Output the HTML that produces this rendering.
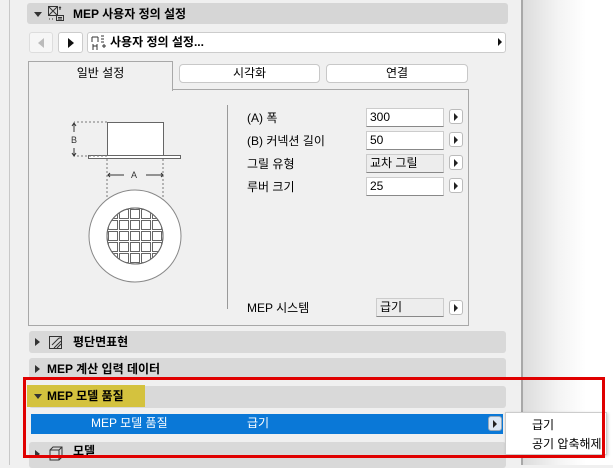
<!DOCTYPE html>
<html><head><meta charset="utf-8"><style>
*{box-sizing:border-box;margin:0;padding:0}
body{width:613px;height:465px;overflow:hidden;background:#f0f0f0;font-family:"Liberation Sans","Noto Sans CJK KR",sans-serif;font-size:12px;color:#000;position:relative}
.a{position:absolute}
.sec{position:absolute;left:29px;width:477px;height:22px;background:#d9d9d9;border-radius:3px;font-weight:bold;font-size:12px;line-height:22px}
.tri{position:absolute;width:0;height:0;border-top:4px solid transparent;border-bottom:4px solid transparent;border-left:5px solid #333}
.trd{position:absolute;width:0;height:0;border-left:4px solid transparent;border-right:4px solid transparent;border-top:5px solid #333}
.inp{position:absolute;background:#fff;border:1px solid #ccc;border-bottom:1px solid #888;height:19px;padding-left:3px;line-height:17px;font-size:12px}
.btn{position:absolute;width:14px;height:15px;background:#fff;border:1px solid #bbb;border-radius:3px}
.btn:after{content:"";position:absolute;left:4px;top:3px;border-top:4px solid transparent;border-bottom:4px solid transparent;border-left:4px solid #222}
.lbl{position:absolute;left:247px;font-size:12px}
.tab{position:absolute;top:64px;height:19px;background:#fff;border:1px solid #c8c8c8;border-radius:4px;text-align:center;line-height:17px}
</style></head><body>
<div class="a" style="left:9px;top:0;width:1px;height:465px;background:#c8c8c8"></div>
<div class="a" style="left:521px;top:0;width:2px;height:465px;background:#a8a8a8"></div>
<div class="a" style="left:523px;top:0;width:90px;height:465px;background:linear-gradient(90deg,#dcdcdc,#f4f4f4 40%,#fff 70%)"></div>

<div class="sec" style="top:3px;left:27px;width:481px;height:21px;background:#d6d6d6"><div class="trd" style="left:7px;top:9px"></div>
<svg class="a" style="left:20px;top:2px" width="18" height="17" viewBox="0 0 18 17" fill="none" stroke="#333" stroke-width="1"><rect x="1.5" y="1.5" width="9" height="9"/><path d="M2 2l8 8M10 2l-8 8"/><path d="M13 2v3M12 3l1-1 1 1" /><rect x="9.5" y="10.5" width="7" height="5"/><path d="M11 12.5h4M11 14h4M2 14h1M5 14h1"/></svg>
<span class="a" style="left:46px;top:0">MEP 사용자 정의 설정</span></div>

<div class="a" style="left:29px;top:32px;width:24px;height:21px;background:#f6f6f6;border:1px solid #ddd;border-radius:3px"><div style="position:absolute;left:8px;top:5px;border-top:5px solid transparent;border-bottom:5px solid transparent;border-right:6px solid #bbb"></div></div>
<div class="a" style="left:58px;top:32px;width:25px;height:21px;background:#fff;border:1px solid #ccc;border-radius:3px"><div style="position:absolute;left:9px;top:5px;border-top:5px solid transparent;border-bottom:5px solid transparent;border-left:6px solid #111"></div></div>
<div class="a" style="left:87px;top:32px;width:419px;height:21px;background:#fff;border:1px solid #ccc;border-radius:3px;font-weight:bold;line-height:19px">
<svg class="a" style="left:2px;top:2px" width="17" height="16" viewBox="0 0 17 16" fill="none" stroke="#333"><path d="M2 2h6M2 2v5M8 2v5M3 9v6M7 9v6M3 11h4M11 1h3M11 4h3M11 7h3M12 11h4M14 9v4"/></svg>
<span class="a" style="left:22px;top:0">사용자 정의 설정...</span>
<div style="position:absolute;right:3px;top:5px;border-top:4px solid transparent;border-bottom:4px solid transparent;border-left:4px solid #111"></div></div>

<div class="a" style="left:28px;top:89px;width:441px;height:237px;border:1px solid #a8a8a8"></div>
<div class="a" style="left:28px;top:61px;width:145px;height:30px;background:#f0f0f0;border:1px solid #a8a8a8;border-bottom:none;text-align:center;line-height:22px">일반 설정</div>
<div class="tab" style="left:179px;width:141px">시각화</div>
<div class="tab" style="left:326px;width:142px">연결</div>

<svg class="a" style="left:60px;top:115px" width="150" height="170" viewBox="0 0 150 170" fill="none">
<rect x="47.5" y="7.5" width="56" height="33" fill="#fff" stroke="#666"/>
<rect x="28.5" y="40.5" width="92" height="3" fill="#fff" stroke="#666"/>
<path d="M47 7H14M47 41H14M47 44v82M103 44v82" stroke="#777" stroke-dasharray="2 2"/>
<path d="M14 9v8M14 33v8M48 60h16M86 60h16" stroke="#333"/>
<path d="M12 11l2-3 2 3M12 38l2 3 2-3M50 58l-2 2 2 2M101 58l2 2-2 2" stroke="#333"/>
<text x="11" y="28" font-size="9" fill="#333" font-family="Liberation Sans">B</text>
<text x="71" y="63" font-size="9" fill="#333" font-family="Liberation Sans">A</text>
<circle cx="75" cy="121" r="46" fill="#fff" stroke="#888"/>
<clipPath id="c"><circle cx="75" cy="121" r="27.5"/></clipPath>
<circle cx="75" cy="121" r="28" fill="#fff" stroke="#666"/>
<g clip-path="url(#c)" stroke="#666" fill="#fff">
<rect x="37.5" y="83.5" width="9" height="9"/><rect x="48.5" y="83.5" width="9" height="9"/><rect x="59.5" y="83.5" width="9" height="9"/><rect x="70.5" y="83.5" width="9" height="9"/><rect x="81.5" y="83.5" width="9" height="9"/><rect x="92.5" y="83.5" width="9" height="9"/><rect x="103.5" y="83.5" width="9" height="9"/>
<rect x="37.5" y="94.5" width="9" height="9"/><rect x="48.5" y="94.5" width="9" height="9"/><rect x="59.5" y="94.5" width="9" height="9"/><rect x="70.5" y="94.5" width="9" height="9"/><rect x="81.5" y="94.5" width="9" height="9"/><rect x="92.5" y="94.5" width="9" height="9"/><rect x="103.5" y="94.5" width="9" height="9"/>
<rect x="37.5" y="105.5" width="9" height="9"/><rect x="48.5" y="105.5" width="9" height="9"/><rect x="59.5" y="105.5" width="9" height="9"/><rect x="70.5" y="105.5" width="9" height="9"/><rect x="81.5" y="105.5" width="9" height="9"/><rect x="92.5" y="105.5" width="9" height="9"/><rect x="103.5" y="105.5" width="9" height="9"/>
<rect x="37.5" y="116.5" width="9" height="9"/><rect x="48.5" y="116.5" width="9" height="9"/><rect x="59.5" y="116.5" width="9" height="9"/><rect x="70.5" y="116.5" width="9" height="9"/><rect x="81.5" y="116.5" width="9" height="9"/><rect x="92.5" y="116.5" width="9" height="9"/><rect x="103.5" y="116.5" width="9" height="9"/>
<rect x="37.5" y="127.5" width="9" height="9"/><rect x="48.5" y="127.5" width="9" height="9"/><rect x="59.5" y="127.5" width="9" height="9"/><rect x="70.5" y="127.5" width="9" height="9"/><rect x="81.5" y="127.5" width="9" height="9"/><rect x="92.5" y="127.5" width="9" height="9"/><rect x="103.5" y="127.5" width="9" height="9"/>
<rect x="37.5" y="138.5" width="9" height="9"/><rect x="48.5" y="138.5" width="9" height="9"/><rect x="59.5" y="138.5" width="9" height="9"/><rect x="70.5" y="138.5" width="9" height="9"/><rect x="81.5" y="138.5" width="9" height="9"/><rect x="92.5" y="138.5" width="9" height="9"/><rect x="103.5" y="138.5" width="9" height="9"/>
<rect x="37.5" y="149.5" width="9" height="9"/><rect x="48.5" y="149.5" width="9" height="9"/><rect x="59.5" y="149.5" width="9" height="9"/><rect x="70.5" y="149.5" width="9" height="9"/><rect x="81.5" y="149.5" width="9" height="9"/><rect x="92.5" y="149.5" width="9" height="9"/><rect x="103.5" y="149.5" width="9" height="9"/>
</g>
<circle cx="75" cy="121" r="28" stroke="#666"/>
</svg>

<div class="a" style="left:227px;top:105px;width:1px;height:204px;background:#999"></div>
<div class="lbl" style="top:109px">(A) 폭</div>
<div class="lbl" style="top:132px">(B) 커넥션 길이</div>
<div class="lbl" style="top:155px">그릴 유형</div>
<div class="lbl" style="top:178px">루버 크기</div>
<div class="inp" style="left:366px;top:108px;width:78px">300</div>
<div class="inp" style="left:366px;top:131px;width:78px">50</div>
<div class="inp" style="left:366px;top:154px;width:78px;background:#ededed">교차 그릴</div>
<div class="inp" style="left:366px;top:177px;width:78px">25</div>
<div class="btn" style="left:449px;top:109px"></div>
<div class="btn" style="left:449px;top:132px"></div>
<div class="btn" style="left:449px;top:155px"></div>
<div class="btn" style="left:449px;top:178px"></div>
<div class="lbl" style="top:299px">MEP 시스템</div>
<div class="inp" style="left:376px;top:298px;width:68px;background:#ededed">급기</div>
<div class="btn" style="left:449px;top:300px"></div>

<div class="sec" style="top:331px"><div class="tri" style="left:6px;top:7px"></div>
<svg class="a" style="left:19px;top:3px" width="16" height="16" viewBox="0 0 16 16" fill="none" stroke="#333"><rect x="1.5" y="2.5" width="12" height="12"/><path d="M6 14l7-7M9 14l4-4M4 11l7-7M12 3v2" /></svg>
<span class="a" style="left:44px">평단면표현</span></div>
<div class="sec" style="top:358px"><div class="tri" style="left:6px;top:7px"></div><span class="a" style="left:18px">MEP 계산 입력 데이터</span></div>
<div class="sec" style="top:386px"></div>
<div class="a" style="left:27px;top:385px;width:118px;height:22px;background:#d4c23e;font-weight:bold;line-height:22px"><div class="trd" style="left:7px;top:9px"></div><span class="a" style="left:20px">MEP 모델 품질</span></div>
<div class="a" style="left:31px;top:414px;width:472px;height:20px;background:#0a78d7;color:#fff;line-height:19px"><span class="a" style="left:60px">MEP 모델 품질</span><span class="a" style="left:216px">급기</span></div>
<div class="btn" style="left:488px;top:416px;background:#dce8f5;border-color:#9ab"></div>
<div class="sec" style="top:442px;height:26px"><div class="tri" style="left:6px;top:8px"></div>
<svg class="a" style="left:19px;top:3px" width="16" height="17" viewBox="0 0 16 17" fill="none" stroke="#333"><path d="M2 5l3-3h9v10l-3 3H2zM2 5h9v10M11 5l3-3"/></svg>
<span class="a" style="left:44px;top:-2px">모델</span></div>
<div class="a" style="left:505px;top:412px;width:102px;height:43px;background:#fff;border:1px solid #ccc;box-shadow:1px 1px 3px rgba(0,0,0,.2)"><span class="a" style="left:26px;top:3px">급기</span><span class="a" style="left:26px;top:22px">공기 압축해제</span></div>
<div class="a" style="left:23px;top:377px;width:582px;height:81px;border:3px solid #e00000"></div>
</body></html>
